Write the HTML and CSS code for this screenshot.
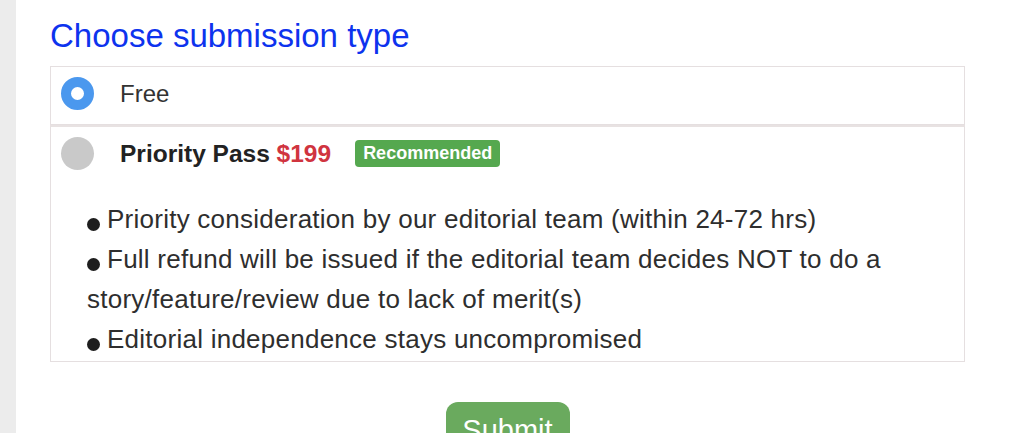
FILE: index.html
```html
<!DOCTYPE html>
<html lang="en">
<head>
    <meta charset="UTF-8">
    <meta name="viewport" content="width=device-width, initial-scale=1.0">
    <title>Choose submission type</title>
    <link rel="stylesheet" href="styles.css">
</head>
<body>
    <div class="page">
        <div class="sidebar"></div>
        <div class="main">
            <h2 class="title">Choose submission type</h2>
            <form id="submissionForm">
                <div class="option option-free">
                    <label class="option-row">
                        <span class="radio checked"></span>
                        <span class="option-name">Free</span>
                    </label>
                </div>
                <div class="option option-priority">
                    <label class="option-row">
                        <span class="radio"></span>
                        <span class="option-name bold">Priority Pass <span class="price">$199</span></span>
                        <span class="badge">Recommended</span>
                    </label>
                    <div class="perks">
                        <div class="perk"><span class="dot"></span>Priority consideration by our editorial team (within 24-72 hrs)</div>
                        <div class="perk"><span class="dot"></span>Full refund will be issued if the editorial team decides NOT to do a story/feature/review due to lack of merit(s)</div>
                        <div class="perk"><span class="dot"></span>Editorial independence stays uncompromised</div>
                    </div>
                </div>
                <div class="actions">
                    <button type="submit" class="submit">Submit</button>
                </div>
            </form>
        </div>
    </div>

    <script>
        const options = document.querySelectorAll('.option-row');
        options.forEach(function(row) {
            row.addEventListener('click', function() {
                document.querySelectorAll('.radio').forEach(function(r) {
                    r.classList.remove('checked');
                });
                row.querySelector('.radio').classList.add('checked');
            });
        });
        document.getElementById('submissionForm').addEventListener('submit', function(event) {
            event.preventDefault();
        });
    </script>
</body>
</html>
```

FILE: styles.css
```css
body {
    margin: 0;
    font-family: "Liberation Sans", Arial, sans-serif;
    background-color: white;
    color: #333;
}
.page {
    display: flex;
    height: 433px;
    overflow: hidden;
}
.sidebar {
    width: 16px;
    background-color: #ececec;
    flex-shrink: 0;
}
.main {
    padding: 18px 0 0 34px;
    width: 915px;
}
.title {
    margin: 0 0 12px 0;
    font-size: 33px;
    line-height: 36px;
    font-weight: normal;
    color: #0d33ee;
}
.option {
    border: 1px solid #e5dfe0;
}
.option-free {
    height: 57px;
}
.option-priority {
    border-top-width: 2px;
    border-top-color: #e8e2e2;
    height: 234px;
}
.option-row {
    display: flex;
    align-items: center;
    padding: 10px 0 0 10px;
    cursor: pointer;
}
.radio {
    width: 33px;
    height: 33px;
    border-radius: 50%;
    background-color: #c9c9c9;
    box-sizing: border-box;
    margin-right: 26px;
    flex-shrink: 0;
}
.radio.checked {
    background-color: white;
    border: 10.5px solid #4b98ee;
}
.option-name {
    font-size: 24px;
    color: #333;
}
.bold {
    font-size: 24.5px;
    font-weight: bold;
    color: #222;
}
.price {
    color: #d0343f;
}
.badge {
    margin-left: 24px;
    background-color: #55a84f;
    color: white;
    font-weight: bold;
    font-size: 18px;
    line-height: 27px;
    padding: 0 8px;
    border-radius: 4px;
}
.perks {
    margin-top: 29px;
    padding: 0 20px 0 36px;
    font-size: 26px;
    letter-spacing: 0.25px;
    line-height: 40px;
    color: #2e2e2e;
}
.dot {
    display: inline-block;
    width: 13px;
    height: 13px;
    border-radius: 50%;
    background-color: #1e1e1e;
    vertical-align: -3px;
    margin-right: 7px;
}
.actions {
    text-align: center;
    padding-top: 40px;
}
.submit {
    width: 124px;
    height: 56px;
    border: none;
    border-radius: 12px;
    background-color: #6aaa5e;
    color: white;
    font-family: "Liberation Sans", Arial, sans-serif;
    font-size: 29px;
    padding: 0;
    cursor: pointer;
}
```
